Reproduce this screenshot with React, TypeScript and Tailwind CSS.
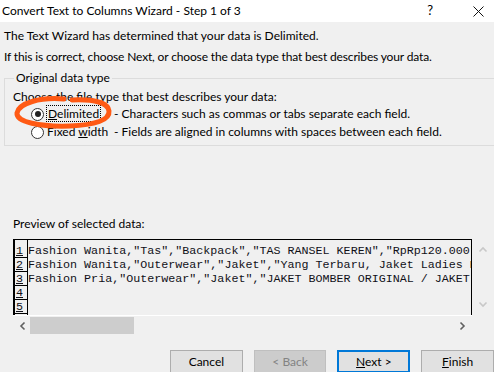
import React from "react";

const rows = [
  'Fashion Wanita,"Tas","Backpack","TAS RANSEL KEREN","RpRp120.000","Tas Ransel',
  'Fashion Wanita,"Outerwear","Jaket","Yang Terbaru, Jaket Ladies Hoodie',
  'Fashion Pria,"Outerwear","Jaket","JAKET BOMBER ORIGINAL / JAKET PRIA',
  "",
  "",
];

function Radio({ checked }: { checked?: boolean }) {
  return (
    <span className="w-[13px] h-[13px] rounded-full border border-[#333] bg-white flex items-center justify-center shrink-0">
      {checked && <span className="w-[6px] h-[6px] rounded-full bg-[#222]" />}
    </span>
  );
}

export default function App() {
  return (
    <div className="w-[494px] h-[372px] overflow-hidden bg-[#f0f0f0] text-black text-[12px] relative font-['Lato','Noto_Sans',sans-serif]">
      {/* title bar */}
      <div className="h-[22px] bg-white flex items-center pl-[2px] pr-[8px]">
        <span className="text-[12px] leading-none">Convert Text to Columns Wizard - Step 1 of 3</span>
        <span className="ml-auto mr-[40px] text-[13px]">?</span>
        <svg width="11" height="11" viewBox="0 0 11 11" className="mr-[2px]">
          <path d="M0.5 0.5 L10.5 10.5 M10.5 0.5 L0.5 10.5" stroke="#111" strokeWidth="1" />
        </svg>
      </div>

      <div className="pl-[4px] pt-[6px]">
        <p className="leading-[16px]">The Text Wizard has determined that your data is Delimited.</p>
        <p className="leading-[16px] mt-[5px] tracking-[-0.15px]">If this is correct, choose Next, or choose the data type that best describes your data.</p>
      </div>

      <fieldset className="ml-[4px] mt-[5px] w-[500px] h-[76px] border border-[#dcdcdc] pl-[8px] pt-[1px]">
        <legend className="ml-[1px] px-[2px] leading-[16px]">Original data type</legend>
        <p className="leading-[16px] mt-[2px]">Choose the file type that best describes your data:</p>
        <div className="flex items-center h-[18px] pl-[18px]">
          <Radio checked />
          <span className="ml-[2px] w-[68px]">
            <span className="border border-dotted border-black px-[1px] leading-[14px]">
              <span className="underline">D</span>elimited
            </span>
          </span>
          <span>- Characters such as commas or tabs separate each field.</span>
        </div>
        <div className="flex items-center h-[18px] pl-[18px]">
          <Radio />
          <span className="ml-[3px] w-[67px]">
            Fixed <span className="underline">w</span>idth
          </span>
          <span>- Fields are aligned in columns with spaces between each field.</span>
        </div>
      </fieldset>

      <p className="ml-[13px] mt-[70px] leading-[16px]">Preview of selected data:</p>

      <div className="ml-[13px] mt-[7px] flex">
        <div className="w-[459px]">
          <div className="h-[76px] border-l-2 border-t border-r border-black flex overflow-hidden font-['Liberation_Mono','Courier_New',monospace] text-[11.7px] text-[#101018]">
            <div className="w-[13px] border-r border-black pt-[4px] shrink-0">
              {rows.map((_, i) => (
                <div key={i} className="h-[14px] border-b border-black leading-[14px] pl-[1px] underline">
                  {i + 1}
                </div>
              ))}
            </div>
            <div className="pt-[4px] whitespace-pre">
              {rows.map((r, i) => (
                <div key={i} className="h-[14px] leading-[14px]">
                  {r}
                </div>
              ))}
            </div>
          </div>
          <div className="h-[20px] border-t border-white flex items-center">
            <svg width="16" height="16" viewBox="0 0 16 16" className="ml-[2px]">
              <path d="M9.5 4.5 L6 8 L9.5 11.5" stroke="#606060" strokeWidth="1.6" fill="none" />
            </svg>
            <div className="ml-[-1px] w-[104px] h-[17px] bg-[#cdcdcd]" />
            <svg width="16" height="16" viewBox="0 0 16 16" className="ml-auto mr-[2px]">
              <path d="M6.5 4.5 L10 8 L6.5 11.5" stroke="#606060" strokeWidth="1.6" fill="none" />
            </svg>
          </div>
        </div>
        <div className="w-[22px] h-[76px] flex flex-col items-center justify-between py-[3px]">
          <svg width="16" height="16" viewBox="0 0 16 16">
            <path d="M4.5 9.5 L8 6 L11.5 9.5" stroke="#c8c8c8" strokeWidth="1.6" fill="none" />
          </svg>
          <svg width="16" height="16" viewBox="0 0 16 16">
            <path d="M4.5 6.5 L8 10 L11.5 6.5" stroke="#c8c8c8" strokeWidth="1.6" fill="none" />
          </svg>
        </div>
      </div>

      <div className="flex mt-[15px] ml-[170px] gap-[11px]">
        <button className="w-[74px] h-[23px] bg-[#e1e1e1] border border-[#adadad]">Cancel</button>
        <button className="w-[74px] h-[23px] bg-[#cccccc] border border-[#bfbfbf] text-[#838383]">&lt; Back</button>
        <button className="w-[74px] h-[23px] bg-[#e1e1e1] border-2 border-[#0078d7]">
          <span className="underline">N</span>ext &gt;
        </button>
        <button className="w-[74px] h-[23px] bg-[#e1e1e1] border border-[#adadad]">
          <span className="underline">F</span>inish
        </button>
      </div>

      {/* hand-drawn highlight */}
      <svg className="absolute left-0 top-0 pointer-events-none" width="494" height="372">
        <path
          d="M64 99 C40 97, 19 103, 17 113 C16 122, 40 127, 70 126 C95 125, 110 120, 109 111 C108 103, 95 99, 72 100"
          stroke="#ff5a14"
          strokeWidth="5"
          fill="none"
          strokeLinecap="round"
        />
      </svg>
    </div>
  );
}
